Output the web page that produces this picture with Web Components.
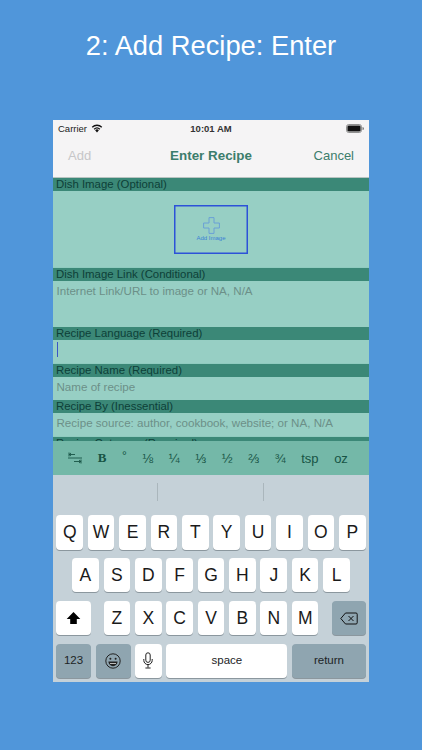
<!DOCTYPE html>
<html>
<head>
<meta charset="utf-8">
<style>
  html, body { margin: 0; height: 100%; background: #5096da; }
  body { font-family: "Liberation Sans", Arial, sans-serif; overflow: hidden; }
</style>
</head>
<body>
<store-page caption="2: Add Recipe: Enter">
  <status-bar></status-bar>
  <nav-bar left="Add" title="Enter Recipe" right="Cancel"></nav-bar>
  <form-list>
    <form-section label="Dish Image (Optional)" height="76"><add-image></add-image></form-section>
    <form-section label="Dish Image Link (Conditional)" hint="Internet Link/URL to image or NA, N/A" height="46"></form-section>
    <form-section label="Recipe Language (Required)" height="23" caret></form-section>
    <form-section label="Recipe Name (Required)" hint="Name of recipe" height="23"></form-section>
    <form-section label="Recipe By (Inessential)" hint="Recipe source: author, cookbook, website; or NA, N/A" height="23"></form-section>
    <form-section label="Recipe Category (Required)" height="23"></form-section>
  </form-list>
  <input-accessory></input-accessory>
  <ios-keyboard></ios-keyboard>
</store-page>

<script>
class StorePage extends HTMLElement {
  constructor() {
    super();
    this.attachShadow({ mode: "open" });
  }
  connectedCallback() {
    this.shadowRoot.innerHTML = `
      <style>
        :host { display: flex; flex-direction: column; align-items: center; height: 750px; }
        h1 {
          margin: 0;
          height: 120px;
          padding-top: 30px;
          box-sizing: border-box;
          color: #fff;
          font-size: 27.3px;
          line-height: 32px;
          font-weight: 400;
        }
        .phone {
          width: 316px;
          height: 562px;
          display: flex;
          flex-direction: column;
          overflow: hidden;
          background: #f5f4f5;
        }
      </style>
      <h1>${this.getAttribute("caption")}</h1>
      <div class="phone"><slot></slot></div>
    `;
  }
}

class StatusBar extends HTMLElement {
  constructor() {
    super();
    this.attachShadow({ mode: "open" });
  }
  connectedCallback() {
    this.shadowRoot.innerHTML = `
      <style>
        :host {
          display: grid;
          grid-template-columns: 1fr auto 1fr;
          align-items: center;
          height: 16px;
          padding: 0 5px 1px;
          color: #222;
          font-size: 9.5px;
          flex: none;
        }
        .left { display: flex; align-items: center; gap: 4px; }
        .time { font-weight: 700; font-size: 9.5px; color: #333; }
        .right { display: flex; justify-content: flex-end; }
      </style>
      <div class="left">
        <span>Carrier</span>
        <svg width="12" height="9" viewBox="0 0 13 10">
          <path d="M6.5 9.4 4.4 7a3 3 0 0 1 4.2 0z" fill="#111"/>
          <path d="M3.3 5.8a4.7 4.7 0 0 1 6.4 0" fill="none" stroke="#111" stroke-width="1.5"/>
          <path d="M1.2 3.5a7.8 7.8 0 0 1 10.6 0" fill="none" stroke="#111" stroke-width="1.5"/>
        </svg>
      </div>
      <span class="time">10:01 AM</span>
      <div class="right">
        <svg width="18" height="9" viewBox="0 0 18 9">
          <rect x=".5" y=".5" width="15" height="8" rx="2.2" fill="none" stroke="#777" stroke-width=".8"/>
          <rect x="1.4" y="1.4" width="13.2" height="6.2" rx="1.4" fill="#111"/>
          <path d="M16.5 3v3a1.4 1.4 0 0 0 0-3z" fill="#777"/>
        </svg>
      </div>
    `;
  }
}

class NavBar extends HTMLElement {
  constructor() {
    super();
    this.attachShadow({ mode: "open" });
  }
  connectedCallback() {
    this.shadowRoot.innerHTML = `
      <style>
        :host {
          display: grid;
          grid-template-columns: 1fr auto 1fr;
          align-items: center;
          flex: none;
          height: 41px;
          padding: 0 15px 3px;
          box-sizing: border-box;
          border-bottom: 1px solid #b9c4c1;
          font-size: 13px;
          color: #3c7d6c;
        }
        .off { color: #c6c6c8; }
        b { font-weight: 700; font-size: 13.4px; }
        .end { text-align: right; }
      </style>
      <span class="off">${this.getAttribute("left")}</span>
      <b>${this.getAttribute("title")}</b>
      <span class="end">${this.getAttribute("right")}</span>
    `;
  }
}

class FormList extends HTMLElement {
  constructor() {
    super();
    this.attachShadow({ mode: "open" });
  }
  connectedCallback() {
    this.shadowRoot.innerHTML = `
      <style>
        :host {
          display: block;
          flex: none;
          height: 263px;
          overflow: hidden;
          background: #8fcbbf;
        }
      </style>
      <slot></slot>
    `;
  }
}

class FormSection extends HTMLElement {
  constructor() {
    super();
    this.attachShadow({ mode: "open" });
  }
  connectedCallback() {
    const hint = this.getAttribute("hint");
    const caret = this.hasAttribute("caret") ? `<i class="caret"></i>` : "";
    this.shadowRoot.innerHTML = `
      <style>
        :host { display: block; }
        .label {
          height: 13px;
          line-height: 13px;
          padding-left: 3px;
          background: #3b8877;
          color: #0d3f37;
          font-size: 11.4px;
        }
        .body {
          height: ${this.getAttribute("height")}px;
          box-sizing: border-box;
          padding: 3px 3.5px 0;
          background: #97cfc4;
          color: #6c8f88;
          font-size: 11.6px;
          line-height: 13px;
          margin-bottom: .5px;
        }
        .caret {
          display: block;
          width: 1.5px;
          height: 15px;
          margin-top: -1px;
          background: #3a56c8;
        }
        ::slotted(add-image) { margin: 11px auto 0; }
      </style>
      <div class="label">${this.getAttribute("label")}</div>
      <div class="body">${hint || ""}${caret}<slot></slot></div>
    `;
  }
}

class AddImage extends HTMLElement {
  constructor() {
    super();
    this.attachShadow({ mode: "open" });
  }
  connectedCallback() {
    this.shadowRoot.innerHTML = `
      <style>
        :host {
          display: flex;
          flex-direction: column;
          align-items: center;
          width: 74px;
          height: 49px;
          box-sizing: border-box;
          padding-top: 12px;
          box-shadow: inset 0 0 0 1.5px #2c52d8;
          color: #3b7fd6;
          font-size: 6px;
          line-height: 7px;
        }
        svg { display: block; margin-bottom: 1px; }
      </style>
      <svg width="17" height="17" viewBox="0 0 17 17">
        <path d="M6 .6h5v5.4h5.4v5H11v5.4H6V11H.6V6H6z" fill="none" stroke="#6ba0d6" stroke-width="1"/>
      </svg>
      <span>Add Image</span>
    `;
  }
}

class InputAccessory extends HTMLElement {
  constructor() {
    super();
    this.attachShadow({ mode: "open" });
  }
  connectedCallback() {
    const items = ["⅛", "¼", "⅓", "½", "⅔", "¾"];
    this.shadowRoot.innerHTML = `
      <style>
        :host {
          display: flex;
          align-items: center;
          justify-content: space-between;
          flex: none;
          height: 34px;
          padding: 0 21px 0 15px;
          box-sizing: border-box;
          background: #74b8a8;
          color: #175445;
          font-size: 13px;
        }
        span { display: block; text-align: center; }
        .bold { font-family: "Liberation Serif", serif; font-weight: 700; font-size: 13px; }
        .deg { font-size: 12px; margin-top: -4px; }
        svg { display: block; }
      </style>
      <svg width="14" height="12" viewBox="0 0 14 12" fill="none" stroke="#175445" stroke-width=".9">
        <path d="M1 .5v4M1 2.5h6M3 1 1.2 2.5 3 4"/>
        <path d="M0 6h14"/>
        <path d="M13 7.5v4M13 9.5H6M11 8l1.8 1.5L11 11"/>
      </svg>
      <span class="bold">B</span>
      <span class="deg">°</span>
      ${items.map(i => `<span>${i}</span>`).join("")}
      <span>tsp</span>
      <span>oz</span>
    `;
  }
}

class KeyCap extends HTMLElement {
  constructor() {
    super();
    this.attachShadow({ mode: "open" });
  }
  connectedCallback() {
    this.shadowRoot.innerHTML = `
      <style>
        :host {
          display: flex;
          align-items: center;
          justify-content: center;
          box-sizing: border-box;
          height: 34.5px;
          width: 26.6px;
          flex: none;
          border-radius: 4px;
          background: #fff;
          box-shadow: 0 1px 0 #8b979e;
          color: #1a1a1a;
          font-size: 17.5px;
        }
        :host([dark]) { background: #8fa5b0; }
        :host([small]) { font-size: 11.5px; color: #1c2426; padding-bottom: 2px; }
        :host([wide]) { width: 34.5px; }
      </style>
      <slot></slot>
    `;
  }
}

class IosKeyboard extends HTMLElement {
  constructor() {
    super();
    this.attachShadow({ mode: "open" });
  }
  connectedCallback() {
    const row = s => [...s].map(c => `<key-cap>${c}</key-cap>`).join("");
    this.shadowRoot.innerHTML = `
      <style>
        :host {
          display: block;
          flex: 1;
          background: #c5d1d8;
        }
        .suggest {
          height: 40px;
          display: grid;
          grid-template-columns: 105px 105.5px 1fr;
          padding-top: 8px;
          box-sizing: border-box;
        }
        .suggest div { height: 18px; border-right: 1px solid #aab6bc; }
        .suggest div:last-child { border: 0; }
        .rows { display: flex; flex-direction: column; gap: 8.4px; padding: 0 3px; }
        .row { display: flex; justify-content: center; gap: 4.8px; }
        .row.third { justify-content: space-between; }
        .letters { display: flex; gap: 4.8px; }
        .bottom { justify-content: space-between; gap: 4.5px; }
        .bottom key-cap:nth-child(1), .bottom key-cap:nth-child(2) { width: 35px; }
        .bottom key-cap:nth-child(4) { width: 121px; }
        .bottom key-cap:nth-child(5) { width: 74px; }
        svg { display: block; }
      </style>
      <div class="suggest"><div></div><div></div><div></div></div>
      <div class="rows">
        <div class="row">${row("QWERTYUIOP")}</div>
        <div class="row">${row("ASDFGHJKL")}</div>
        <div class="row third">
          <key-cap wide>
            <svg width="15" height="14" viewBox="0 0 15 14"><path d="M7.5 1 14.3 8H10.8v5H4.2V8H.7z" fill="#000"/></svg>
          </key-cap>
          <div class="letters">${row("ZXCVBNM")}</div>
          <key-cap wide dark>
            <svg width="18" height="13" viewBox="0 0 18 13" fill="none" stroke="#111" stroke-width="1">
              <path d="M5.5 1H16a1.2 1.2 0 0 1 1.2 1.2v8.6A1.2 1.2 0 0 1 16 12H5.5L.8 6.5z"/>
              <path d="M8.5 4l5 5M13.5 4l-5 5"/>
            </svg>
          </key-cap>
        </div>
        <div class="row bottom">
          <key-cap dark small>123</key-cap>
          <key-cap dark>
            <svg width="16" height="16" viewBox="0 0 16 16" fill="none" stroke="#222" stroke-width="1">
              <circle cx="8" cy="8" r="7.2"/>
              <circle cx="5.4" cy="5.8" r="1" fill="#222" stroke="none"/>
              <circle cx="10.6" cy="5.8" r="1" fill="#222" stroke="none"/>
              <path d="M3.4 8.6h9.2a4.6 4.6 0 0 1-9.2 0z" fill="#222" stroke="none"/>
              <path d="M5 10h6v.7H5z" fill="#fff" stroke="none"/>
            </svg>
          </key-cap>
          <key-cap>
            <svg width="10" height="17" viewBox="0 0 10 17" fill="none" stroke="#222" stroke-width="1">
              <rect x="2.8" y=".8" width="4.4" height="9.6" rx="2.2"/>
              <path d="M.8 7v1.4a4.2 4.2 0 0 0 8.4 0V7M5 12.6v3M2.4 16h5.2"/>
            </svg>
          </key-cap>
          <key-cap small>space</key-cap>
          <key-cap dark small>return</key-cap>
        </div>
      </div>
    `;
  }
}

customElements.define("store-page", StorePage);
customElements.define("status-bar", StatusBar);
customElements.define("nav-bar", NavBar);
customElements.define("form-list", FormList);
customElements.define("form-section", FormSection);
customElements.define("add-image", AddImage);
customElements.define("input-accessory", InputAccessory);
customElements.define("key-cap", KeyCap);
customElements.define("ios-keyboard", IosKeyboard);
</script>
</body>
</html>
